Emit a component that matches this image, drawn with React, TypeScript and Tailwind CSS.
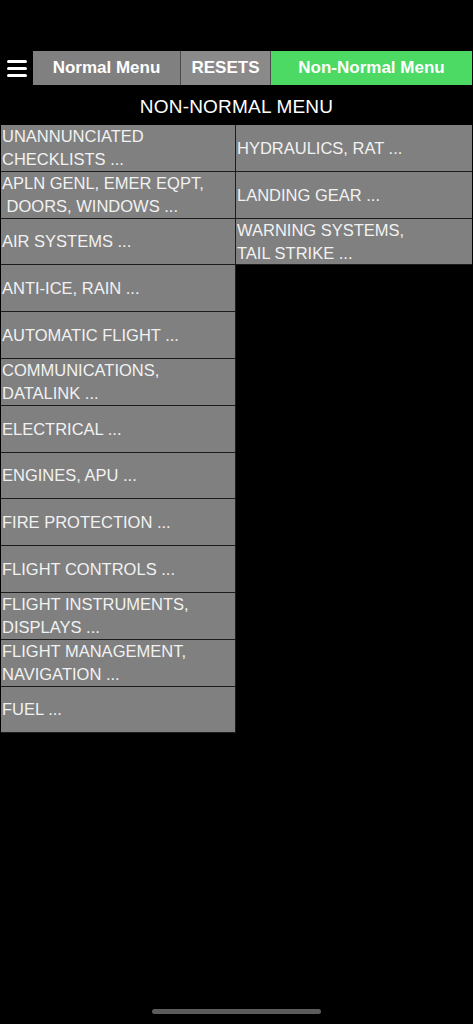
import React from 'react';

const leftItems = [
  ['UNANNUNCIATED', 'CHECKLISTS ...'],
  ['APLN GENL, EMER EQPT,', '\u00a0DOORS, WINDOWS ...'],
  ['AIR SYSTEMS ...'],
  ['ANTI-ICE, RAIN ...'],
  ['AUTOMATIC FLIGHT ...'],
  ['COMMUNICATIONS,', 'DATALINK ...'],
  ['ELECTRICAL ...'],
  ['ENGINES, APU ...'],
  ['FIRE PROTECTION ...'],
  ['FLIGHT CONTROLS ...'],
  ['FLIGHT INSTRUMENTS,', 'DISPLAYS ...'],
  ['FLIGHT MANAGEMENT,', 'NAVIGATION ...'],
  ['FUEL ...'],
];

const rightItems = [
  ['HYDRAULICS, RAT ...'],
  ['LANDING GEAR ...'],
  ['WARNING SYSTEMS,', 'TAIL STRIKE ...'],
];

const MenuCell: React.FC<{ lines: string[] }> = ({ lines }) => (
  <button className="h-[46.8px] w-full bg-[#808080] border-b border-[#1c1c1c] flex flex-col justify-center items-start px-[1px] pt-[1px] text-left text-[16.5px] leading-[23px] text-[#f2f2f2]">
    {lines.map((l) => (
      <span key={l} className="whitespace-pre">{l}</span>
    ))}
  </button>
);

export default function App() {
  return (
    <div className="w-[473px] h-[1024px] bg-black relative overflow-hidden" style={{ fontFamily: '"Liberation Sans", Arial, sans-serif' }}>
      {/* top navigation */}
      <div className="pt-[51px] flex items-stretch h-[85px]">
        <div className="w-[33px] flex flex-col justify-center items-center gap-[4px]">
          <span className="block w-[20px] h-[3px] rounded-full bg-white" />
          <span className="block w-[20px] h-[3px] rounded-full bg-white" />
          <span className="block w-[20px] h-[3px] rounded-full bg-white" />
        </div>
        <button className="w-[147px] bg-[#808080] text-white font-bold text-[17px] flex items-center justify-center">
          Normal Menu
        </button>
        <div className="w-[1px] bg-[#4a4a4a]" />
        <button className="w-[89px] bg-[#8a8a8a] text-white font-bold text-[17px] flex items-center justify-center">
          RESETS
        </button>
        <div className="w-[1px] bg-[#4a4a4a]" />
        <button className="flex-1 bg-[#4cd964] text-white font-bold text-[17px] flex items-center justify-center mr-[1px]">
          Non-Normal Menu
        </button>
      </div>

      <div className="h-[40px] pt-[4px] flex items-center justify-center text-white text-[19px] tracking-[0.2px]">
        NON-NORMAL MENU
      </div>

      {/* checklist grid */}
      <div className="flex pl-[1px] pr-[1px]">
        <div className="w-[235px] flex flex-col border-r border-[#1c1c1c]">
          {leftItems.map((lines) => (
            <MenuCell key={lines[0]} lines={lines} />
          ))}
        </div>
        <div className="flex-1 flex flex-col">
          {rightItems.map((lines) => (
            <MenuCell key={lines[0]} lines={lines} />
          ))}
        </div>
      </div>

      <div className="absolute left-[152px] bottom-[10px] w-[169px] h-[5px] rounded-full bg-[#5c5c5c]" />
    </div>
  );
}
